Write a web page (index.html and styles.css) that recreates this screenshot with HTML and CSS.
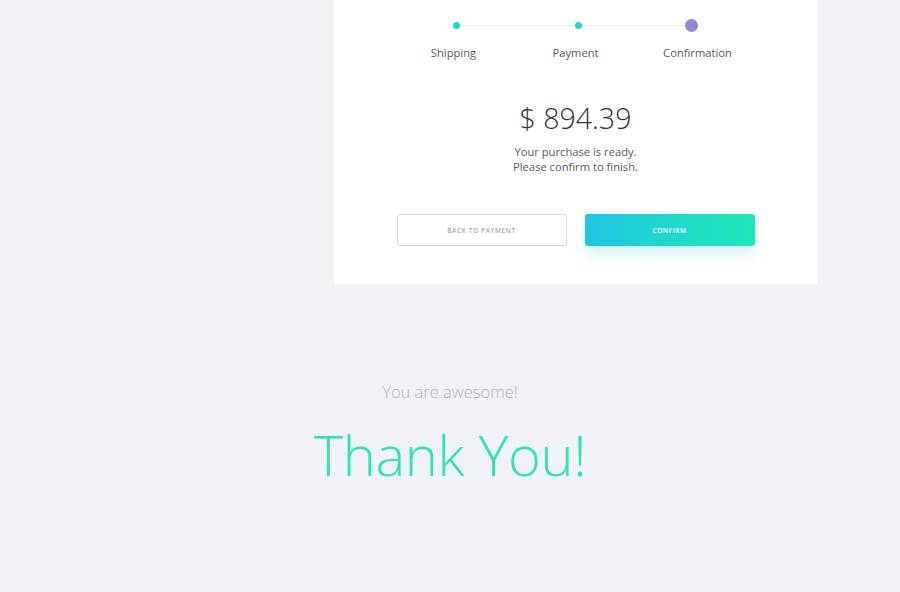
FILE: index.html
```
<!DOCTYPE html>
<html>
<head>
<meta charset="utf-8">
<link rel="stylesheet" href="styles.css">
</head>
<body>
<div class="page">
  <section class="card">
    <div class="steps">
      <div class="step done"><span class="dot"></span><span class="label">Shipping</span></div>
      <div class="step done"><span class="dot"></span><span class="label">Payment</span></div>
      <div class="step active"><span class="dot"></span><span class="label">Confirmation</span></div>
    </div>
    <div class="price">$ 894.39</div>
    <p class="note">Your purchase is ready.<br>Please confirm to finish.</p>
    <div class="actions">
      <button class="btn btn-back">BACK TO PAYMENT</button>
      <button class="btn btn-confirm">CONFIRM</button>
    </div>
  </section>
  <section class="thanks">
    <p class="awesome">You are awesome!</p>
    <h1 class="thank">Thank You!</h1>
  </section>
</div>
</body>
</html>
```
FILE: styles.css
```
* { box-sizing: border-box; }
html, body { margin: 0; padding: 0; }
body {
  background: #f1f2f6;
  font-family: "Open Sans", "Liberation Sans", sans-serif;
  width: 900px;
  height: 592px;
  overflow: hidden;
}
.page { display: flex; flex-direction: column; }
.card {
  margin-left: 334px;
  width: 483px;
  height: 284px;
  background: #fff;
  display: flex;
  flex-direction: column;
  align-items: center;
}
.steps {
  position: relative;
  display: grid;
  grid-template-columns: repeat(3, 122px);
  margin-top: 19px;
}
.steps::before {
  content: "";
  position: absolute;
  left: 64px;
  right: 67px;
  top: 6px;
  height: 1px;
  background: #ececec;
}
.step {
  display: flex;
  flex-direction: column;
  align-items: center;
  position: relative;
}
.step .dot {
  width: 7px;
  height: 7px;
  margin-top: 3px;
  margin-bottom: 3px;
  border-radius: 50%;
  background: #27d3c6;
}
.step.done:first-child .dot { margin-left: 6px; }
.step.done:nth-child(2) .dot { margin-left: 6px; }
.step.active .dot {
  width: 13px;
  height: 13px;
  margin: 0 12px 0 0;
  background: #8f88d2;
}
.label {
  margin-top: 13px;
  font-size: 11.2px;
  line-height: 16px;
  color: #5a5a5a;
}
.price {
  margin-top: 39px;
  font-size: 28.5px;
  font-weight: 300;
  line-height: 36px;
  color: #333;
}
.note {
  margin: 8px 0 0;
  font-size: 11.2px;
  line-height: 15px;
  color: #5a5a5a;
  text-align: center;
}
.actions {
  display: flex;
  gap: 18px;
  margin-top: 40px;
}
.btn {
  width: 170px;
  height: 32px;
  border-radius: 3px;
  font-family: "Open Sans", "Liberation Sans", sans-serif;
  font-size: 6.5px;
  font-weight: 600;
  letter-spacing: 0.6px;
  padding: 0;
}
.btn-back {
  background: #fff;
  border: 1px solid #dcdcdc;
  color: #a8a8a8;
}
.btn-confirm {
  border: none;
  color: #fff;
  background: linear-gradient(90deg, #1fc6e2, #1ee8b6);
  box-shadow: 0 8px 14px rgba(40, 200, 200, 0.22);
}
.thanks {
  display: flex;
  flex-direction: column;
  align-items: center;
}
.awesome {
  margin: 97px 0 0;
  font-size: 16.5px;
  font-weight: 300;
  line-height: 22px;
  color: #b3b3b8;
}
.thank {
  margin: 16px 0 0;
  font-size: 56px;
  font-weight: 300;
  line-height: 70px;
  color: #2ee4ac;
  letter-spacing: -0.3px;
}
```
